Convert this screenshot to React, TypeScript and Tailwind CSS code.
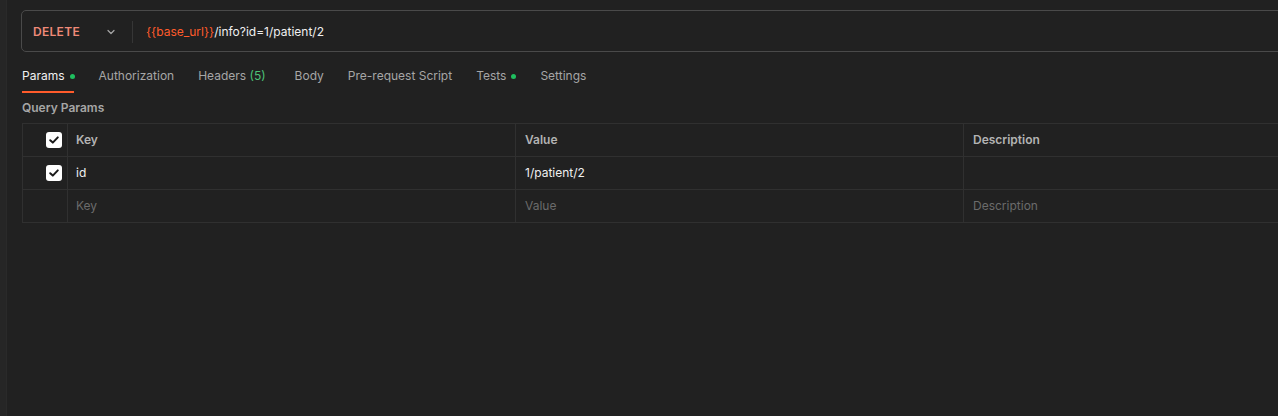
import React from "react";

function Check() {
  return (
    <div className="w-[16px] h-[16px] rounded-[3px] bg-white flex items-center justify-center">
      <svg width="12" height="12" viewBox="0 0 12 12" fill="none">
        <path d="M2.2 6.2 L4.8 8.6 L9.8 3.4" stroke="#1a1a1a" strokeWidth="2" strokeLinecap="round" strokeLinejoin="round" />
      </svg>
    </div>
  );
}

function Row({ first, k, v, d, header, placeholder }: { first: React.ReactNode; k: string; v: string; d: string; header?: boolean; placeholder?: boolean }) {
  const txt = header ? "text-[#b3b3b3] font-semibold" : placeholder ? "text-[#6b6b6b]" : "text-[#f0f0f0]";
  return (
    <div className="flex h-[33px] border-b border-[#303030]">
      <div className="w-[45px] shrink-0 border-r border-[#303030] flex items-center justify-end pr-[5px]">{first}</div>
      <div className={`w-[448px] shrink-0 border-r border-[#303030] flex items-center pl-[8px] ${txt}`}>{k}</div>
      <div className={`w-[448px] shrink-0 border-r border-[#303030] flex items-center pl-[9px] ${txt}`}>{v}</div>
      <div className={`flex-1 flex items-center pl-[9px] ${txt}`}>{d}</div>
    </div>
  );
}

export default function App() {
  return (
    <div className="w-[1278px] h-[416px] bg-[#212121] flex overflow-hidden text-[12px]" style={{ fontFamily: "Inter, 'Noto Sans', sans-serif" }}>
      <div className="w-[7px] shrink-0 bg-[#262626] border-r border-[#2a2a2a]" />
      <div className="flex-1 pl-[15px] pt-[10px] min-w-0">
        <div className="h-[42px] w-[1300px] -ml-[1px] border border-[#4a4a4a] rounded-[5px] flex items-center pt-[1px]">
          <div className="pl-[11px] w-[110px] text-[#f08a78] font-semibold text-[12px] tracking-[0.3px]">DELETE</div>
          <svg width="10" height="10" viewBox="0 0 10 10" fill="none" className="ml-[-26px]">
            <path d="M2 3.5 L5 6.5 L8 3.5" stroke="#a6a6a6" strokeWidth="1.2" strokeLinecap="round" strokeLinejoin="round" />
          </svg>
          <div className="ml-[16px] w-px h-[22px] bg-[#363636]" />
          <div className="ml-[13px] text-[12px]">
            <span className="text-[#ff5b2b]">{"{{base_url}}"}</span>
            <span className="text-[#f0f0f0]">/info?id=1/patient/2</span>
          </div>
        </div>
        <div className="flex items-end h-[40px] mt-[2px] gap-[24px] text-[#a6a6a6]">
          <div className="flex flex-col items-start mb-[1px]">
            <div className="flex items-center gap-[5px] text-[#f0f0f0] pb-[6px]">
              Params <span className="w-[5px] h-[5px] rounded-full bg-[#1fbf5f]" />
            </div>
            <div className="h-[2px] w-[52px] bg-[#ff5b2b]" />
          </div>
          <div className="pb-[9px]">Authorization</div>
          <div className="pb-[9px]">Headers <span className="text-[#4cc277]">(5)</span></div>
          <div className="pb-[9px] ml-[5px]">Body</div>
          <div className="pb-[9px]">Pre-request Script</div>
          <div className="pb-[9px] flex items-center gap-[5px]">Tests <span className="w-[5px] h-[5px] rounded-full bg-[#1fbf5f]" /></div>
          <div className="pb-[9px]">Settings</div>
        </div>
        <div className="mt-[6px] text-[#a6a6a6] font-semibold h-[16px] leading-[16px]">Query Params</div>
        <div className="mt-[7px] w-[1300px] border-t border-l border-[#303030]">
          <Row header first={<Check />} k="Key" v="Value" d="Description" />
          <Row first={<Check />} k="id" v="1/patient/2" d="" />
          <Row placeholder first={null} k="Key" v="Value" d="Description" />
        </div>
      </div>
    </div>
  );
}
